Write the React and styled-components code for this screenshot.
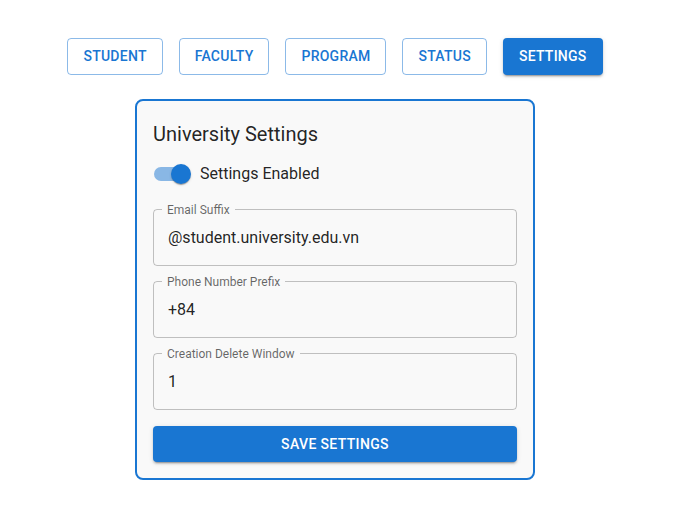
import React, { useState } from 'react';
import styled, { createGlobalStyle, css } from 'styled-components';

const GlobalStyle = createGlobalStyle`
  body {
    margin: 0;
    background: #fff;
    font-family: Roboto, "Liberation Sans", Arial, sans-serif;
    color: rgba(0, 0, 0, 0.87);
  }
  * { box-sizing: border-box; }
`;

const Page = styled.div`
  display: flex;
  flex-direction: column;
  align-items: center;
  padding: 38px 5px 0 0;
`;

const Nav = styled.nav`
  display: flex;
  justify-content: center;
  gap: 16px;
  margin-bottom: 24px;
`;

const NavButton = styled.button`
  font-family: inherit;
  font-size: 14px;
  font-weight: 500;
  line-height: 1.75;
  letter-spacing: 0.25px;
  text-transform: uppercase;
  border-radius: 4px;
  cursor: pointer;
  ${({ $active }) =>
    $active
      ? css`
          padding: 6px 16px;
          border: none;
          background: #1976d2;
          color: #fff;
          box-shadow: 0px 3px 1px -2px rgba(0, 0, 0, 0.2), 0px 2px 2px 0px rgba(0, 0, 0, 0.14),
            0px 1px 5px 0px rgba(0, 0, 0, 0.12);
        `
      : css`
          padding: 5px 15px;
          border: 1px solid rgba(25, 118, 210, 0.5);
          background: transparent;
          color: #1976d2;
        `}
`;

const Card = styled.section`
  width: 400px;
  border: 2px solid #1976d2;
  border-radius: 8px;
  background: #f9f9f9;
  padding: 16px;
  display: flex;
  flex-direction: column;
`;

const Title = styled.h2`
  margin: 0;
  font-size: 20px;
  font-weight: 400;
  line-height: 32px;
  padding-top: 1px;
`;

const ToggleRow = styled.label`
  display: inline-flex;
  align-items: center;
  margin: 5px 0 11px -11px;
  font-size: 16px;
  line-height: 1.5;
  cursor: pointer;
`;

const SwitchRoot = styled.span`
  position: relative;
  display: inline-flex;
  width: 58px;
  height: 38px;
  padding: 12px;
  flex-shrink: 0;
`;

const Track = styled.span`
  width: 34px;
  height: 14px;
  border-radius: 7px;
  background: ${({ $on }) => ($on ? '#1976d2' : '#000')};
  opacity: ${({ $on }) => ($on ? 0.5 : 0.38)};
`;

const Thumb = styled.span`
  position: absolute;
  top: 9px;
  left: ${({ $on }) => ($on ? '29px' : '9px')};
  width: 20px;
  height: 20px;
  border-radius: 50%;
  background: ${({ $on }) => ($on ? '#1976d2' : '#fff')};
  box-shadow: 0px 2px 1px -1px rgba(0, 0, 0, 0.2), 0px 1px 1px 0px rgba(0, 0, 0, 0.14),
    0px 1px 3px 0px rgba(0, 0, 0, 0.12);
`;

const Fields = styled.div`
  display: flex;
  flex-direction: column;
  gap: 10px;
`;

const Outline = styled.fieldset`
  margin: 0;
  padding: 0 8px;
  border: 1px solid rgba(0, 0, 0, 0.23);
  border-radius: 4px;
  min-width: 0;
`;

const Legend = styled.legend`
  padding: 0 5px;
  font-size: 12px;
  line-height: 12px;
  color: rgba(0, 0, 0, 0.6);
`;

const Input = styled.input`
  display: block;
  width: 100%;
  height: 49px;
  padding: 10.5px 6px 15.5px;
  border: none;
  background: transparent;
  outline: none;
  font-family: inherit;
  font-size: 16px;
  line-height: 23px;
  color: rgba(0, 0, 0, 0.87);
`;

const SaveButton = styled.button`
  margin-top: 16px;
  width: 100%;
  padding: 6px 16px;
  border: none;
  border-radius: 4px;
  background: #1976d2;
  color: #fff;
  font-family: inherit;
  font-size: 14px;
  font-weight: 500;
  line-height: 1.75;
  letter-spacing: 0.35px;
  text-transform: uppercase;
  cursor: pointer;
  box-shadow: 0px 3px 1px -2px rgba(0, 0, 0, 0.2), 0px 2px 2px 0px rgba(0, 0, 0, 0.14),
    0px 1px 5px 0px rgba(0, 0, 0, 0.12);
`;

const tabs = ['Student', 'Faculty', 'Program', 'Status', 'Settings'];

const TextField = ({ label, value, onChange }) => (
  <Outline>
    <Legend>{label}</Legend>
    <Input value={value} onChange={(e) => onChange(e.target.value)} />
  </Outline>
);

export default function App() {
  const [tab, setTab] = useState('Settings');
  const [enabled, setEnabled] = useState(true);
  const [emailSuffix, setEmailSuffix] = useState('@student.university.edu.vn');
  const [phonePrefix, setPhonePrefix] = useState('+84');
  const [deleteWindow, setDeleteWindow] = useState('1');

  return (
    <Page>
      <GlobalStyle />
      <Nav>
        {tabs.map((t) => (
          <NavButton key={t} $active={tab === t} onClick={() => setTab(t)}>
            {t}
          </NavButton>
        ))}
      </Nav>
      <Card>
        <Title>University Settings</Title>
        <ToggleRow onClick={() => setEnabled((v) => !v)}>
          <SwitchRoot>
            <Track $on={enabled} />
            <Thumb $on={enabled} />
          </SwitchRoot>
          Settings Enabled
        </ToggleRow>
        <Fields>
          <TextField label="Email Suffix" value={emailSuffix} onChange={setEmailSuffix} />
          <TextField label="Phone Number Prefix" value={phonePrefix} onChange={setPhonePrefix} />
          <TextField label="Creation Delete Window" value={deleteWindow} onChange={setDeleteWindow} />
        </Fields>
        <SaveButton>Save Settings</SaveButton>
      </Card>
    </Page>
  );
}
